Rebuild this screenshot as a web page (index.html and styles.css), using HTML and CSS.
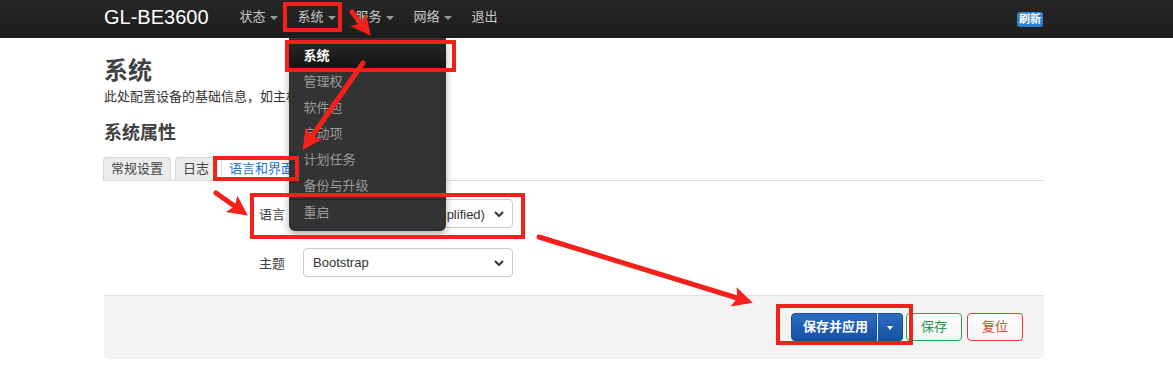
FILE: index.html
```html
<!DOCTYPE html>
<html lang="zh-CN">
<head>
    <meta charset="UTF-8">
    <title>系统 - GL-BE3600</title>
    <link rel="stylesheet" href="styles.css">
</head>
<body>
    <header class="navbar">
        <div class="container navbar-inner">
            <a class="brand" href="#">GL-BE3600</a>
            <ul class="nav">
                <li><a href="#">状态<b class="caret"></b></a></li>
                <li class="open">
                    <a href="#">系统<b class="caret"></b></a>
                    <ul class="dropdown-menu">
                        <li class="active"><a href="#">系统</a></li>
                        <li><a href="#">管理权</a></li>
                        <li><a href="#">软件包</a></li>
                        <li><a href="#">启动项</a></li>
                        <li><a href="#">计划任务</a></li>
                        <li><a href="#">备份与升级</a></li>
                        <li class="divider"></li>
                        <li><a href="#">重启</a></li>
                    </ul>
                </li>
                <li><a href="#">服务<b class="caret"></b></a></li>
                <li><a href="#">网络<b class="caret"></b></a></li>
                <li><a href="#">退出</a></li>
            </ul>
            <span class="badge">刷新</span>
        </div>
    </header>

    <main class="container">
        <h2>系统</h2>
        <p class="desc">此处配置设备的基础信息，如主机名称或时区。</p>
        <h3>系统属性</h3>

        <ul class="tabs">
            <li><a href="#">常规设置</a></li>
            <li><a href="#">日志</a></li>
            <li class="active"><a href="#">语言和界面</a></li>
        </ul>

        <div class="form">
            <div class="row">
                <label class="control-label">语言</label>
                <div class="select"><span>简体中文 (Chinese Simplified)</span>
                    <svg class="chev" width="10" height="6" viewBox="0 0 10 6"><path d="M1 1l4 4 4-4" fill="none" stroke="#333" stroke-width="2"/></svg>
                </div>
            </div>
            <div class="row">
                <label class="control-label">主题</label>
                <div class="select"><span>Bootstrap</span>
                    <svg class="chev" width="10" height="6" viewBox="0 0 10 6"><path d="M1 1l4 4 4-4" fill="none" stroke="#333" stroke-width="2"/></svg>
                </div>
            </div>
        </div>

        <div class="actions">
            <div class="btn-group">
                <button class="btn btn-primary">保存并应用</button><button class="btn btn-primary split"><b class="caret"></b></button>
            </div>
            <button class="btn btn-save">保存</button>
            <button class="btn btn-reset">复位</button>
        </div>
    </main>

    <!-- 红色标注 -->
    <svg class="marks" width="1173" height="372" viewBox="0 0 1173 372">
        <defs>
            <marker id="head" markerUnits="userSpaceOnUse" markerWidth="24" markerHeight="24" viewBox="0 -12 24 24" refX="14" refY="0" orient="auto">
                <path d="M0,-10 L20,0 L0,10 L4,0 Z" fill="#f5201a"/>
            </marker>
        </defs>
        <g fill="none" stroke="#f5201a" stroke-width="4">
            <rect x="285" y="4" width="55" height="26"/>
            <rect x="287" y="42" width="167" height="28"/>
            <rect x="215" y="158" width="82" height="21"/>
            <rect x="252" y="195" width="271" height="42"/>
            <rect x="778" y="306" width="133" height="37"/>
        </g>
        <g stroke="#f5201a" stroke-width="5" stroke-linecap="round" marker-end="url(#head)">
            <line x1="352" y1="12" x2="367" y2="31"/>
            <line x1="363" y1="63" x2="306" y2="145"/>
            <line x1="216" y1="193" x2="243" y2="212"/>
            <line x1="539" y1="237" x2="747" y2="301"/>
        </g>
    </svg>
</body>
</html>
```

FILE: styles.css
```css
*{
    padding:0;
    margin:0;
    box-sizing:border-box;
}
html,body{
    width:100%;
    height:100%;
    background:#fff;
}
body{
    position:relative;
    font-family:"Liberation Sans","Noto Sans CJK SC",sans-serif;
    font-size:13px;
    color:#404040;
}
a{
    text-decoration:none;
}
ul{
    list-style:none;
}
.container{
    width:940px;
    margin-left:104px;
}

/* 顶部导航 */
.navbar{
    height:38px;
    background:linear-gradient(#272727,#1d1d1d);
}
.navbar-inner{
    display:flex;
    align-items:center;
    height:38px;
}
.brand{
    font-size:20px;
    line-height:24px;
    color:#fff;
    margin:0 21px 4px 0;
}
.nav{
    display:flex;
    height:38px;
}
.nav > li{
    position:relative;
    height:38px;
}
.nav > li > a{
    display:block;
    padding:0 10px;
    line-height:34px;
    color:#c8c8c8;
}
.caret{
    display:inline-block;
    width:0;
    height:0;
    margin-left:4px;
    vertical-align:middle;
    border-top:4px solid #999;
    border-left:4px solid transparent;
    border-right:4px solid transparent;
}
.badge{
    margin-left:auto;
    margin-right:1px;
    padding:1px 2px;
    font-size:11px;
    font-weight:bold;
    line-height:13px;
    color:#fff;
    background:#2f80d4;
    border-radius:3px;
}

/* 下拉菜单 */
.dropdown-menu{
    position:absolute;
    top:38px;
    left:1px;
    width:157px;
    padding:5px 0;
    background:#333;
    border-radius:0 0 6px 6px;
    box-shadow:0 4px 8px rgba(0,0,0,.3);
    z-index:10;
}
.dropdown-menu a{
    display:block;
    padding:3px 15px;
    line-height:20px;
    color:#9a9a9a;
}
.dropdown-menu .active a{
    color:#fff;
    font-weight:bold;
    background:linear-gradient(#262626,#141414);
}
.dropdown-menu .divider{
    height:1px;
    background:#262626;
}

/* 内容 */
h2{
    margin-top:18px;
    font-size:24px;
    line-height:30px;
    font-weight:bold;
}
.desc{
    margin-top:2px;
    line-height:18px;
    color:#333;
}
h3{
    margin-top:15px;
    font-size:18px;
    line-height:24px;
    font-weight:bold;
}
.tabs{
    display:flex;
    margin:12px 0 0 -1px;
    border-bottom:1px solid #ddd;
}
.tabs li{
    margin:0 4px -1px 0;
}
.tabs a{
    display:block;
    padding:2px 7px 3px;
    line-height:17px;
    color:#444;
    background:#ececec;
    border:1px solid #d6d6d6;
    border-bottom-color:#ddd;
    border-radius:4px 4px 0 0;
}
.tabs .active a{
    color:#1f75cc;
    background:#fff;
    border-color:#ddd;
    border-bottom-color:#fff;
}

.form{
    padding-top:18px;
}
.row{
    display:flex;
    align-items:center;
    margin-bottom:20px;
}
.control-label{
    width:181px;
    margin-right:18px;
    text-align:right;
    color:#404040;
}
.select{
    display:flex;
    align-items:center;
    width:210px;
    height:29px;
    padding:0 8px 0 9px;
    border:1px solid #ccc;
    border-radius:4px;
    color:#333;
    white-space:nowrap;
    overflow:hidden;
}
.select span{
    flex:1;
    overflow:hidden;
}
.chev{
    margin-left:6px;
    flex:none;
}

/* 底部按钮 */
.actions{
    display:flex;
    justify-content:flex-end;
    margin-top:-2px;
    padding:17px 21px 18px 0;
    background:#f3f3f3;
    border-top:1px solid #ddd;
    border-radius:0 0 5px 5px;
}
.btn{
    height:28px;
    padding:0 13px;
    font-family:inherit;
    font-size:13px;
    line-height:26px;
    border:1px solid #ccc;
    border-radius:4px;
    background:#fff;
    cursor:pointer;
}
.btn-group{
    display:flex;
}
.btn-primary{
    font-weight:bold;
    color:#fff;
    background:linear-gradient(#2b6cc2,#1650a3);
    border-color:#184f9c;
    border-radius:4px 0 0 4px;
    padding:0 8px 0 11px;
}
.btn-primary.split{
    width:26px;
    padding:0;
    border-left:1px solid #e6eefa;
    border-radius:0 4px 4px 0;
}
.btn-primary .caret{
    margin:0;
    border-top-color:#fff;
    border-width:4px 3px 0;
}
.btn-save{
    margin-left:3px;
    padding:0 14px;
    color:#1c9a4c;
    border-color:#2aa15a;
    background:linear-gradient(#fff,#f4f4f4);
}
.btn-reset{
    margin-left:5px;
    padding:0 14px;
    color:#e4412e;
    border-color:#e2402c;
    background:linear-gradient(#fff,#f4f4f4);
}

.marks{
    position:absolute;
    top:0;
    left:0;
    pointer-events:none;
    z-index:20;
}
```
